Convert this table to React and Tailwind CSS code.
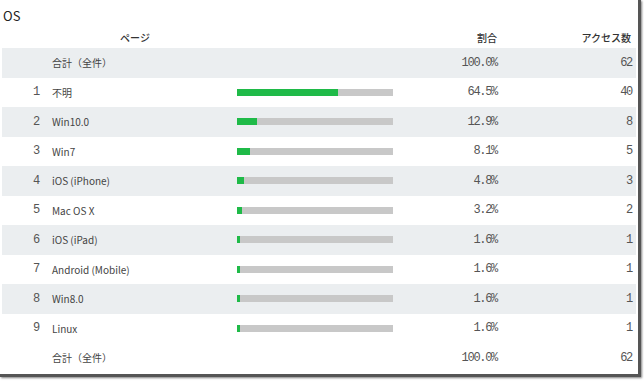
const rows = [
  { no: 1, name: '不明', pct: '64.5%', ratio: 64.5, count: 40 },
  { no: 2, name: 'Win10.0', pct: '12.9%', ratio: 12.9, count: 8 },
  { no: 3, name: 'Win7', pct: '8.1%', ratio: 8.1, count: 5 },
  { no: 4, name: 'iOS (iPhone)', pct: '4.8%', ratio: 4.8, count: 3 },
  { no: 5, name: 'Mac OS X', pct: '3.2%', ratio: 3.2, count: 2 },
  { no: 6, name: 'iOS (iPad)', pct: '1.6%', ratio: 1.6, count: 1 },
  { no: 7, name: 'Android (Mobile)', pct: '1.6%', ratio: 1.6, count: 1 },
  { no: 8, name: 'Win8.0', pct: '1.6%', ratio: 1.6, count: 1 },
  { no: 9, name: 'Linux', pct: '1.6%', ratio: 1.6, count: 1 },
];

const jp = { fontFamily: '"Noto Sans CJK JP", "Noto Sans", sans-serif' };
const mono = { fontFamily: '"Liberation Mono", "DejaVu Sans Mono", monospace' };

const Row = ({ shaded, no, name, pct, ratio, count }) => (
  <div className={`flex items-center h-[29.5px] ${shaded ? 'bg-[#ebeef0]' : 'bg-white'}`}>
    <div className="w-[40px] pr-[3px] text-right text-[12px] tracking-[-1.3px] text-[#555]" style={mono}>{no}</div>
    <div className="w-[195px] pl-[10px] text-[10px] text-[#444]" style={jp}>{name}</div>
    <div className="w-[156px] h-[7px]">
      {ratio !== undefined && (
        <div className="w-full h-full bg-[#c8c8c8] flex">
          <div className="h-full bg-[#1fba48]" style={{ width: `${ratio}%`, minWidth: '3px' }} />
        </div>
      )}
    </div>
    <div className="w-[104px] text-right text-[12px] tracking-[-1.3px] text-[#555]" style={mono}>{pct}</div>
    <div className="flex-1 pr-[4px] text-right text-[12px] tracking-[-1.3px] text-[#555]" style={mono}>{count}</div>
  </div>
);

export default function App() {
  return (
    <div className="w-[644px] h-[381px] bg-white overflow-hidden">
      <div className="w-[641px] h-[377px] bg-white border-r-[3px] border-b-[3px] border-[#555] shadow-[1px_1px_2px_rgba(0,0,0,0.5)]">
        <div className="pl-[3px] pt-[6px] h-[27px] text-[13px] text-[#222]" style={jp}>OS</div>
        <div className="px-[2px]">
          <div className="flex items-center h-[21px] text-[10px] font-medium text-[#333]" style={jp}>
            <div className="w-[266px] text-center">ページ</div>
            <div className="w-[229px] text-right">割合</div>
            <div className="flex-1 pr-[5px] text-right">アクセス数</div>
          </div>
          <Row shaded name="合計（全件）" pct="100.0%" count={62} />
          {rows.map((r) => (
            <Row key={r.no} shaded={r.no % 2 === 0} {...r} />
          ))}
          <Row name="合計（全件）" pct="100.0%" count={62} />
        </div>
      </div>
    </div>
  );
}
